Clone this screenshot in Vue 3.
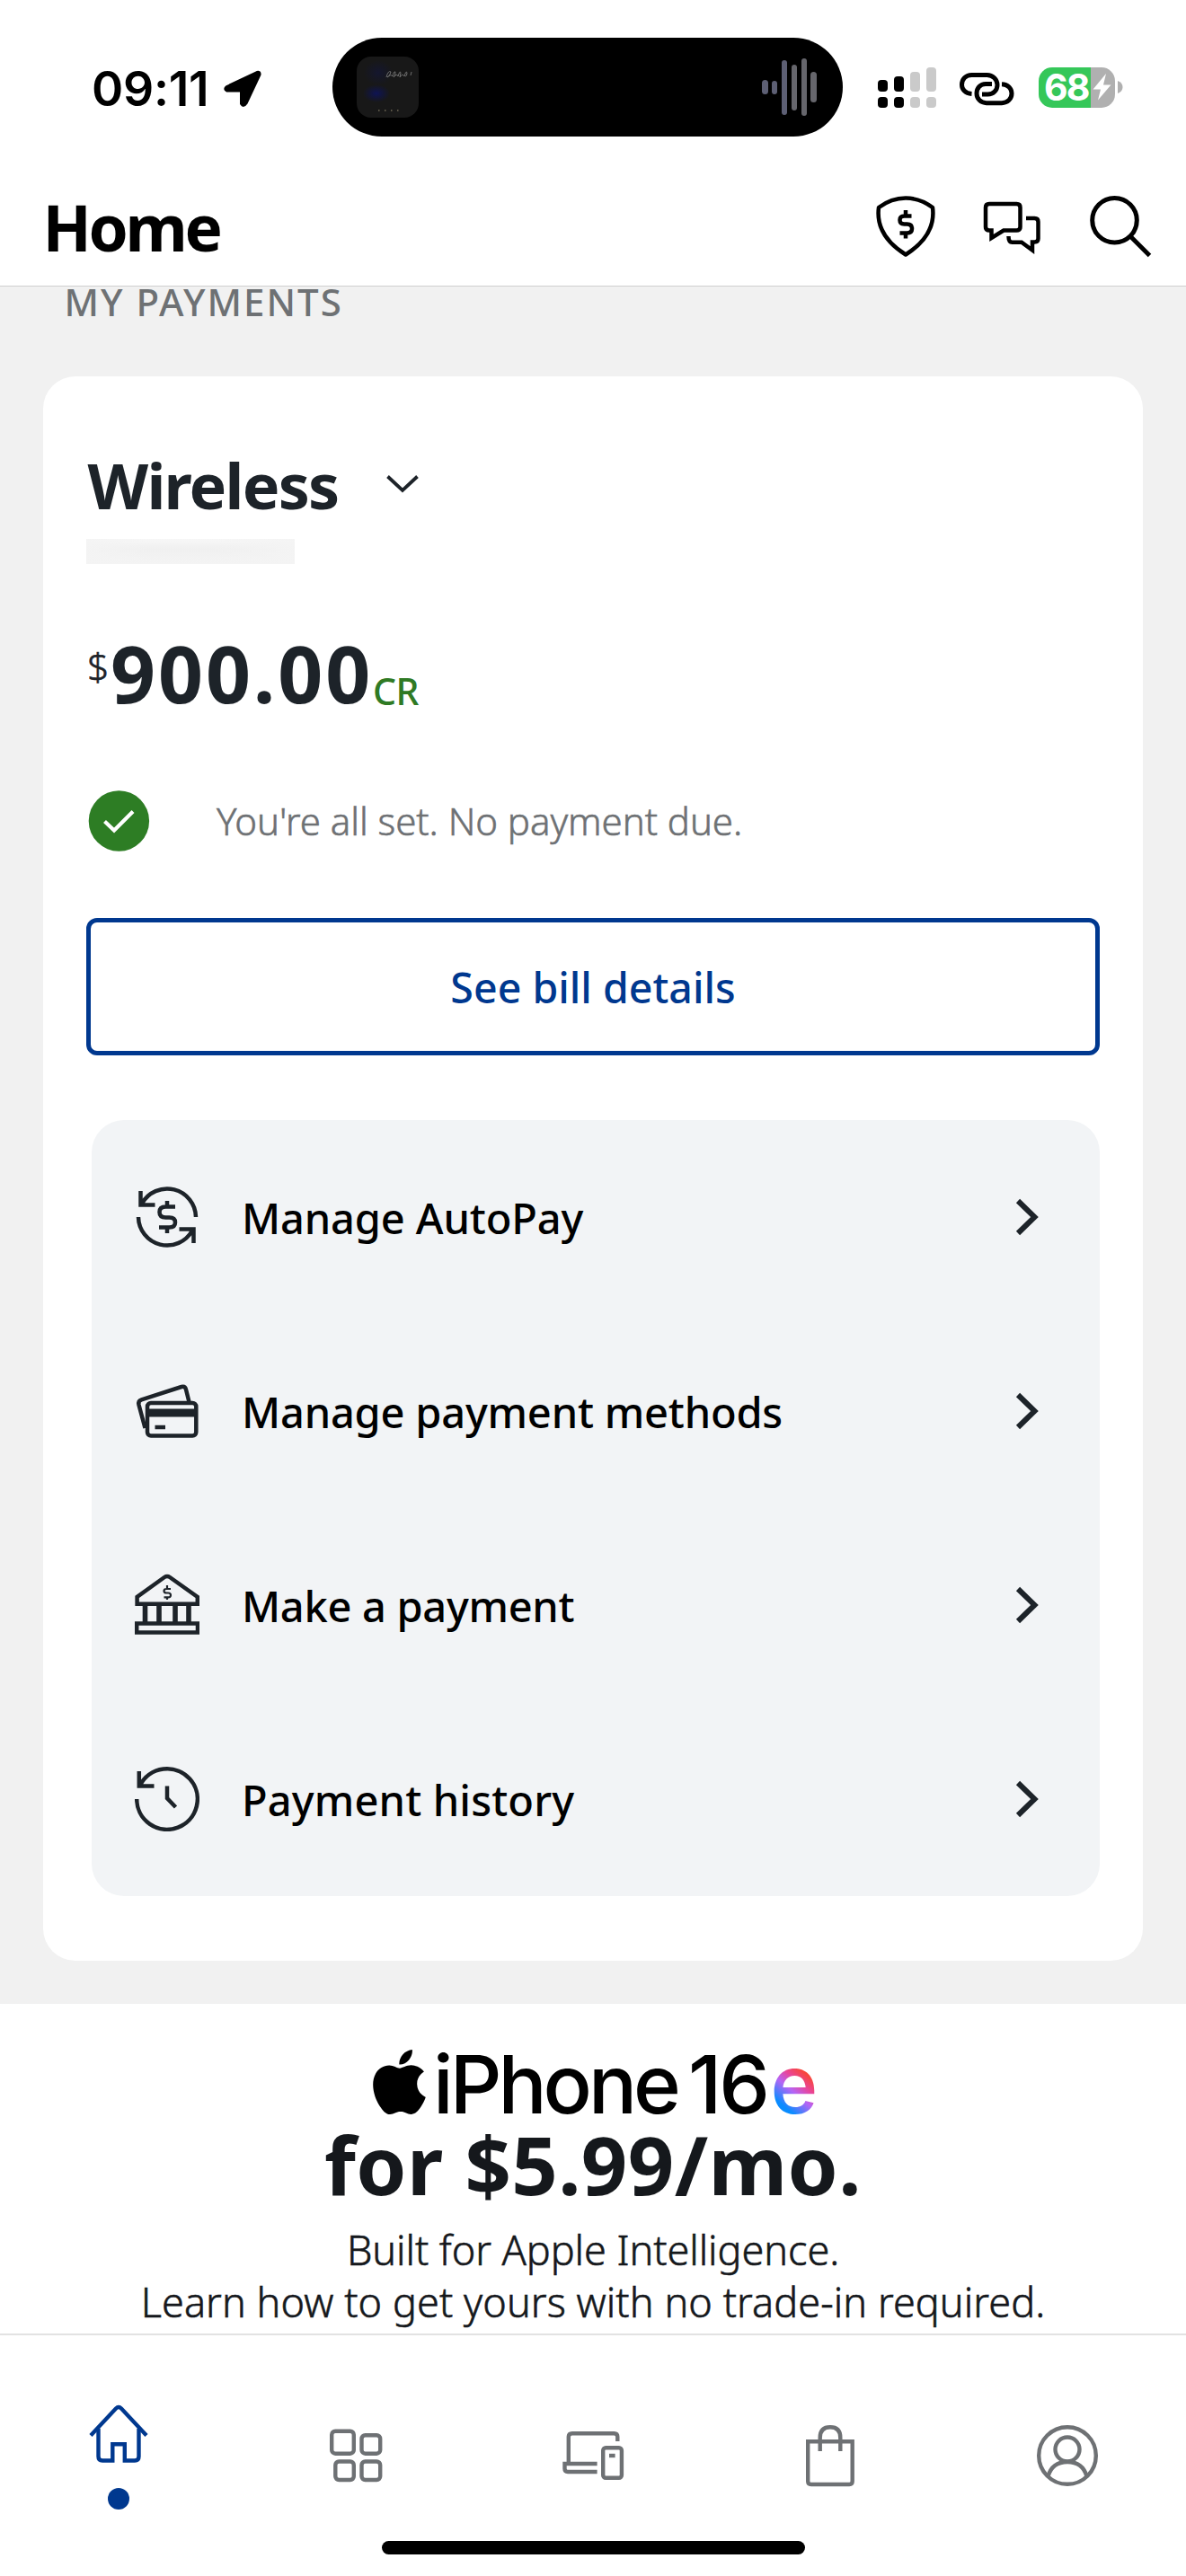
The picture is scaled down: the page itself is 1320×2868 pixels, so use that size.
<script setup>
const rows = [
  { id: 'autopay', label: 'Manage AutoPay', spacing: '-0.13px' },
  { id: 'cards', label: 'Manage payment methods', spacing: '-0.2px' },
  { id: 'bank', label: 'Make a payment', spacing: '-0.3px' },
  { id: 'history', label: 'Payment history', spacing: '0.15px' }
]
const waves = [16, 15, 61, 51, 64, 34]
const signal = [13, 17, 22, 27]
</script>

<template>
  <div class="screen">
    <div class="status">
      <div class="clock">
        <span class="time">09:11</span>
        <svg class="loc" viewBox="249 78 42 41" width="42" height="41">
          <path d="M286 80.5 252.500 96.500Q249 99 252.500 101H268.500V115.500Q271 119.500 274 115L289 83Q289.500 79.500 286 80.500Z" fill="#000" stroke="#000" stroke-width="3" stroke-linejoin="round" />
        </svg>
      </div>
      <div class="island">
        <svg class="album" viewBox="0 0 69 68" width="69" height="68">
          <defs>
            <radialGradient id="glow"><stop offset="0" stop-color="#0b1263" /><stop offset="1" stop-color="#0b1263" stop-opacity="0" /></radialGradient>
          </defs>
          <rect width="69" height="68" rx="16" fill="#181818" />
          <ellipse cx="22" cy="41" rx="15" ry="10" fill="url(#glow)" opacity=".8" />
          <ellipse cx="24" cy="18" rx="16" ry="14" fill="url(#glow)" opacity=".3" />
          <path d="M33 23q2-8 5-6-1 5-4 6 4-4 6-1 1-6 3-5 0 5-2 6 4-5 5-1 2-7 3-4l-1 5q3-5 5-1 2-7 3-4 0 4-2 4M61 17l-1 4" fill="none" stroke="#777" stroke-width=".9" />
          <path d="M24 60h1.500M31 60h1.500M38 60h1.500M45 60h1.500" stroke="#5c5748" stroke-width="2" />
        </svg>
        <div class="waves">
          <i v-for="(h, i) in waves" :key="i" :style="{ height: h + 'px' }"></i>
        </div>
      </div>
      <div class="indicators">
        <div class="signal">
          <div v-for="(h, i) in signal" :key="i" :class="['sig', { off: i > 1 }]">
            <b :style="{ height: h + 'px' }"></b><b class="low"></b>
          </div>
        </div>
        <svg class="link" viewBox="1067 79 63 38" width="63" height="38" fill="none" stroke="#000" stroke-width="5" >
          <path d="M1081.500 103.500C1074 103 1070.500 98 1070.500 93.500C1070.500 87 1075 82.500 1081.500 82.500H1098.500C1105 82.500 1110 87.500 1110 93.500C1110 99.500 1105.500 104 1099.500 104H1093" />
          <path d="M1115 92.800C1122 93 1126 98 1126 103C1126 109 1121.500 113.700 1115 113.700H1098C1091.500 113.700 1087 109 1087 103C1087 97 1091 92.500 1097 92.500H1104" />
        </svg>
        <div class="battery">
          <span class="pct">68</span>
          <svg viewBox="1215 82 21 30" width="21" height="30"><path d="M1230 82 1215.500 99.500H1224L1221 111.500 1235.500 94.500H1227Z" fill="#fff" /></svg>
        </div>
        <svg class="nub" viewBox="0 0 6 14" width="6" height="14"><path d="M0 0Q5.500 2 5.500 7T0 14Z" fill="#b0b0b0" /></svg>
      </div>
    </div>

    <header class="top">
      <h1>Home</h1>
      <svg class="i-shield" viewBox="974 216 68 72" width="68" height="72" fill="none" stroke="#000" stroke-width="4.500">
        <path d="M1008 220.500Q1024 220.500 1038 231Q1042 262 1008 283.500Q974 262 978 231Q992 220.500 1008 220.500Z" stroke-linejoin="round" />
        <path d="M1014.500 240.500H1006.500Q1001.500 240.500 1001.500 245T1006.500 249.500H1009.500Q1015 249.500 1015 254.500T1009.500 259.500H1001.500M1008 234V241M1008 259V265.500" />
      </svg>
      <svg class="i-chat" viewBox="1094 224 66 62" width="66" height="62" fill="none" stroke="#000" stroke-width="4.500">
        <path d="M1101 227H1131.500Q1135.500 227 1135.500 231V252.500Q1135.500 256.500 1131.500 256.500H1117L1103.500 265V256.500H1101Q1097 256.500 1097 252.500V231Q1097 227 1101 227Z" />
        <path d="M1142 243H1151.500Q1155.500 243 1155.500 247V265.500Q1155.500 269.500 1151.500 269.500H1149V278.500L1137 269.800H1126.500Q1122.500 269.800 1122.500 263" />
      </svg>
      <svg class="i-search" viewBox="1212 215 72 72" width="72" height="72" fill="none" stroke="#000" stroke-width="5">
        <circle cx="1240.500" cy="244.300" r="24.800" /><path d="M1258 262 1279.500 283.500" />
      </svg>
    </header>

    <main>
      <div class="section-title">MY PAYMENTS</div>
      <section class="card">
        <div class="account">
          <h2>Wireless</h2>
          <svg viewBox="428 526 40 24" width="40" height="24"><path d="M431.500 530.500 448 546 464.500 530.500" fill="none" stroke="#1d2329" stroke-width="3.800" /></svg>
        </div>
        <div class="masked"></div>
        <div class="amount">
          <span class="cur">$</span><span class="num">900.00</span><span class="cr">CR</span>
        </div>
        <div class="state">
          <svg viewBox="98 880 69 68" width="69" height="68"><circle cx="132.400" cy="914" r="33.700" fill="#2d7d24" /><path d="M116.500 914.500 127 924.500 148 903.500" fill="none" stroke="#fff" stroke-width="4.200" /></svg>
          <span>You're all set. No payment due.</span>
        </div>
        <button class="bill"><span>See bill details</span></button>
        <nav class="panel">
          <a v-for="r in rows" :key="r.id" class="row">
            <svg v-if="r.id === 'autopay'" viewBox="150 1319 72 72" width="72" height="72" class="ico">
              <path d="M218 1355A32 32 0 0 0 158 1340M154 1355A32 32 0 0 0 214 1370M156.500 1326V1341.500H172.500M199.500 1368.500H215.500V1384" />
              <path d="M195 1343.500H184.500Q177.500 1343.500 177.500 1349.500T184.500 1355.500H188.500Q195 1355.500 195 1361T188.500 1366.500H177M186 1337V1344M186 1366V1373" />
            </svg>
            <svg v-else-if="r.id === 'cards'" viewBox="150 1535 72 72" width="72" height="72" class="ico">
              <path d="M161.500 1590 154.500 1564Q153.500 1559.500 157.500 1558.300L202 1544Q206 1543 207 1547L210.500 1561" />
              <rect x="164" y="1562" width="54.300" height="36.500" rx="4" />
              <path d="M164 1573H218" stroke-width="9" /><path d="M172.500 1589H184" stroke-width="4.500" />
            </svg>
            <svg v-else-if="r.id === 'bank'" viewBox="150 1751 72 72" width="72" height="72" class="ico">
              <path d="M152.600 1785.700V1778L183 1756Q186 1754 189 1756L219.800 1778V1785.700Z" />
              <path d="M161.500 1787V1807M177 1787V1807M195 1787V1807M210 1787V1807" stroke-width="5.600" />
              <rect x="152.200" y="1807.500" width="67.800" height="10" />
              <path d="M190 1769H185.500Q182.500 1769 182.500 1771.300T185.500 1773.500H187Q190 1773.500 190 1776T187 1778.300H182.500M186 1765V1769M186 1778V1781" stroke-width="2.200" />
            </svg>
            <svg v-else viewBox="150 1967 72 72" width="72" height="72" class="ico">
              <path d="M152.200 2003A33.800 33.800 0 1 0 156 1987.500M154.800 1972V1988.500H171.500M186 1988.500V2002L195.500 2012" />
            </svg>
            <span class="label" :style="{ letterSpacing: r.spacing }">{{ r.label }}</span>
            <svg viewBox="1130 1334 27 42" width="27" height="42"><path d="M1133 1337 1151.500 1355 1133 1373" fill="none" stroke="#1d2329" stroke-width="6" /></svg>
          </a>
        </nav>
      </section>
    </main>

    <section class="promo">
      <div class="product">
        <svg viewBox="2.200 0 19.600 24" width="59" height="72"><path d="M12.152 6.896c-.948 0-2.415-1.078-3.96-1.04-2.04.027-3.91 1.183-4.961 3.014-2.117 3.675-.546 9.103 1.519 12.09 1.013 1.454 2.208 3.09 3.792 3.039 1.52-.065 2.09-.987 3.935-.987 1.831 0 2.35.987 3.96.948 1.637-.026 2.676-1.48 3.676-2.948 1.156-1.688 1.636-3.325 1.662-3.415-.039-.013-3.182-1.221-3.22-4.857-.026-3.04 2.48-4.494 2.597-4.559-1.429-2.09-3.623-2.324-4.39-2.376-2-.156-3.675 1.09-4.61 1.09zM15.530 3.830c.843-1.012 1.400-2.427 1.245-3.830-1.207.052-2.662.805-3.532 1.818-.780.896-1.454 2.338-1.273 3.714 1.338.104 2.715-.688 3.559-1.701" /></svg>
        <span class="ip">iPhone</span><span class="n16">16</span><span class="e">e</span>
      </div>
      <div class="price">for $5.99/mo.</div>
      <p class="l1">Built for Apple Intelligence.</p>
      <p class="l2">Learn how to get yours with no trade-in required.</p>
    </section>

    <footer>
      <div class="tabs">
        <div class="tab active">
          <svg viewBox="96 2675 72 70" width="72" height="70">
            <path d="M101 2711.500 129 2681.500Q132 2678.500 135 2681.500L163 2711.500" />
            <path d="M109.500 2704V2735Q109.500 2739.500 114 2739.500H125.300V2721.300H138.800V2739.500H150Q154.500 2739.500 154.500 2735V2704" />
          </svg>
          <i></i>
        </div>
        <div class="tab">
          <svg viewBox="360 2698 72 72" width="72" height="72">
            <rect x="369.200" y="2706.700" width="24.600" height="25" rx="4" /><rect x="402.500" y="2711.200" width="20.700" height="20.500" rx="4" />
            <rect x="373.300" y="2740.500" width="20.500" height="20.500" rx="4" /><rect x="402.500" y="2740.500" width="20.700" height="20.500" rx="4" />
          </svg>
        </div>
        <div class="tab">
          <svg viewBox="624 2698 72 72" width="72" height="72">
            <path d="M632.800 2743V2713Q632.800 2709.200 636.800 2709.200H683.500Q687.300 2709.200 687.300 2713V2718M664.600 2743H628.500V2748.500Q628.500 2752 632 2752H664.600" />
            <rect x="671.200" y="2725.200" width="20.700" height="33.500" rx="3" /><path d="M678 2734H684.600" />
          </svg>
        </div>
        <div class="tab">
          <svg viewBox="888 2698 72 72" width="72" height="72">
            <path d="M899.200 2718.200H948.700V2762.500Q948.700 2766 945.200 2766H902.700Q899.200 2766 899.200 2762.500ZM912.700 2729V2714Q912.700 2702.300 924 2702.300T935.300 2714V2729" />
          </svg>
        </div>
        <div class="tab">
          <svg viewBox="1152 2698 72 72" width="72" height="72">
            <circle cx="1188" cy="2734" r="31.800" /><circle cx="1188" cy="2727" r="13.500" />
            <path d="M1166.500 2757Q1171 2741 1188 2741T1209.500 2757" />
          </svg>
        </div>
      </div>
      <div class="bar"></div>
    </footer>
  </div>
</template>

<style>
body { margin: 0; background: #fff; }
</style>

<style scoped>
.screen { width: 1320px; height: 2868px; overflow: hidden; background: #fff; font-family: "Noto Sans", "Open Sans", sans-serif; color: #1d2329; white-space: nowrap; }
.screen * { box-sizing: border-box; }
svg { display: block; flex: none; }
h1, h2, p { margin: 0; }
.status { height: 194px; display: grid; grid-template-columns: 370px 568px 1fr; align-items: center; font-family: Inter, "Liberation Sans", sans-serif; color: #000; }
.clock { display: flex; align-items: center; padding-left: 102px; padding-top: 3px; }
.time { width: 147px; font-size: 53.500px; font-weight: 560; line-height: 60px; letter-spacing: -.3px; }
.island { height: 110px; border-radius: 55px; background: #000; display: flex; align-items: center; justify-content: space-between; padding: 0 29px 0 27px; }
.waves { display: flex; align-items: center; gap: 4.300px; }
.waves i { width: 6.600px; border-radius: 4px; background: #66666c; }
.waves i:nth-child(-n+3) { background: #5d5f74; }
.indicators { display: flex; align-items: center; padding-left: 39px; }
.signal { display: flex; gap: 7px; align-items: flex-end; width: 90px; }
.sig { width: 11px; display: flex; flex-direction: column; gap: 6px; }
.sig b { background: #000; border-radius: 4px; }
.sig .low { height: 12px; }
.sig.off b { background: #cacaca; }
.link { margin-top: 3px; }
.battery { width: 85px; height: 45px; margin-left: 26px; border-radius: 15px; background: linear-gradient(90deg, #35c759 58px, #b0b0b0 58px); display: flex; align-items: center; padding-left: 6px; color: #fff; }
.pct { font-size: 41px; font-weight: 700; line-height: 45px; width: 54px; letter-spacing: -1.800px; }
.nub { margin-left: 3px; }
.top { height: 125px; border-bottom: 1px solid #cfcfcf; padding: 0 36px 9px 48.500px; display: flex; align-items: center; color: #000; }
h1 { font-size: 71px; font-weight: 700; line-height: 100px; letter-spacing: -3.300px; flex: 1; padding-top: 2px; margin-left: -1px; }
.i-chat { margin-left: 52px; margin-top: 6px; }
.i-search { margin-left: 52px; }
main { background: #f1f1f1; height: 1912px; padding: 0 48px; }
.section-title { height: 34px; line-height: 34px; font-size: 42px; font-weight: 500; color: #6e7174; letter-spacing: 2px; padding-left: 23.500px; }
.card { margin-top: 66px; height: 1764px; border-radius: 36px; background: #fff; padding: 81px 48px 0; }
.account { height: 80px; display: flex; align-items: center; padding-left: 1.500px; }
h2 { font-size: 70px; line-height: 80px; font-weight: 700; letter-spacing: -1.800px; width: 330.500px; }
.account svg { margin-top: -4px; }
.masked { margin-top: 20px; width: 232px; height: 28px; background: linear-gradient(90deg, rgba(244,244,244,.9), rgba(244,244,244,0) 30%, rgba(244,244,244,0) 60%, rgba(244,244,244,.9)), linear-gradient(#f7f7f7, #f0f0f0 40%, #f4f4f4); }
.amount { margin-top: 71px; height: 100px; display: flex; padding-left: 1px; }
.cur { font-size: 43px; font-weight: 300; -webkit-text-stroke: .6px currentColor; line-height: 86px; width: 26px; height: 100px; }
.num { font-size: 87.500px; font-weight: 700; line-height: 100px; letter-spacing: 2.900px; width: 292px; }
.cr { font-size: 41px; font-weight: 500; line-height: 140px; height: 100px; color: #2f7a24; letter-spacing: -.5px; }
.state { margin-top: 81px; height: 68px; display: flex; align-items: center; padding-left: 2px; font-size: 42px; font-weight: 300; -webkit-text-stroke: .6px currentColor; line-height: 68px; color: #6e7174; letter-spacing: -.05px; }
.state span { margin-left: 74px; }
.bill { margin-top: 74px; width: 1128px; height: 153px; border: 5px solid #00388f; border-radius: 12px; background: #fff; color: #00388f; font: 500 46.500px/60px "Noto Sans", sans-serif; display: block; padding: 0; }
.panel { margin: 72px 0 0 6px; height: 864px; border-radius: 36px; background: #f2f4f6; }
.row { height: 216px; display: flex; align-items: center; padding: 0 67px 0 48px; }
.ico { fill: none; stroke: #1d2329; stroke-width: 4.500; }
.label { flex: 1; margin-left: 47px; font-size: 47px; font-weight: 500; line-height: 60px; padding-top: 2px; color: #000; }
.promo { height: 367px; padding-top: 49px; text-align: center; }
.product { height: 80px; display: flex; padding-left: 415px; font: 480 90px/82px Inter, sans-serif; color: #000; }
.product svg { margin-top: 2px; }
.ip { width: 284px; margin-left: 8px; text-align: left; letter-spacing: -4px; }
.n16 { width: 91.500px; text-align: left; letter-spacing: -3px; }
.e { background: linear-gradient(40deg, #0a8cff 22%, #b565f5 42%, #e8459a 55%, #f8463a 68%); background-clip: text; -webkit-background-clip: text; color: transparent; }
.price { margin-top: 4px; font-size: 90px; line-height: 90px; font-weight: 700; color: #15181c; letter-spacing: .4px; }
.promo p { font-size: 45px; line-height: 58px; font-weight: 300; -webkit-text-stroke: .6px currentColor; color: #15181c; letter-spacing: .08px; }
.promo .l1 { margin-top: 21.500px; letter-spacing: -.05px; }
footer { height: 270px; border-top: 2px solid #e2e2e2; background: #fff; }
.tabs { height: 229px; display: flex; }
.tab { width: 264px; padding-top: 98px; display: flex; flex-direction: column; align-items: center; }
.tab svg { fill: none; stroke: #6e7174; stroke-width: 4.400; }
.tab.active { padding-top: 75px; }
.tab.active svg { stroke: #00388f; }
.tab.active i { width: 24px; height: 24px; border-radius: 50%; background: #00388f; margin-top: 25px; }
.bar { width: 471px; height: 15px; border-radius: 8px; background: #000; margin: 0 auto; }
</style>
